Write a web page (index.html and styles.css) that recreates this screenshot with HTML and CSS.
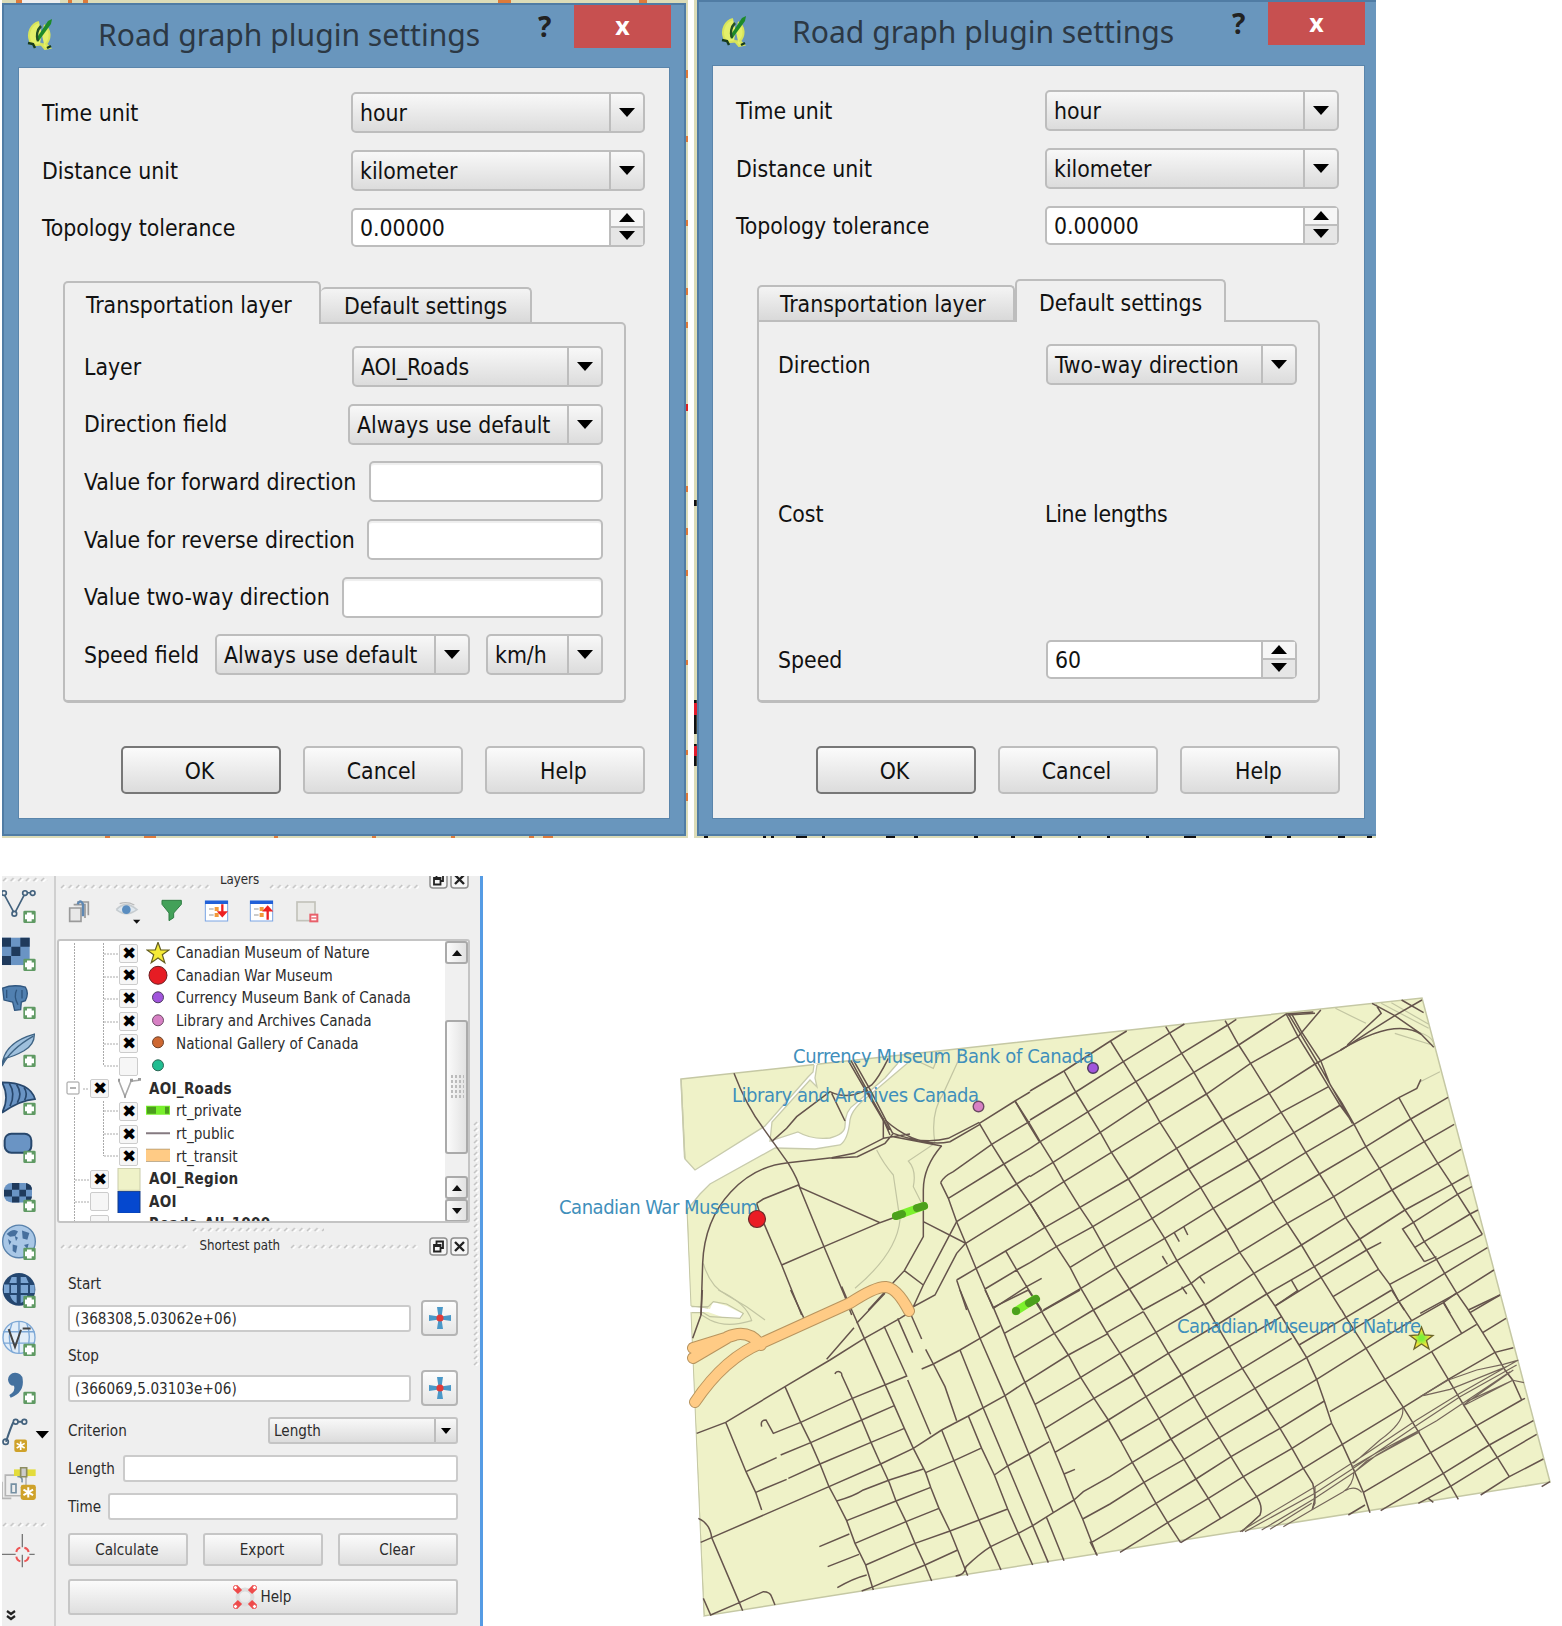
FILE: index.html
```html
<!DOCTYPE html>
<html lang="en">
<head>
<meta charset="utf-8">
<title>Road graph plugin</title>
<link rel="stylesheet" href="styles.css">
</head>
<body>
<svg width="0" height="0" class="defs">
  <defs>
    <g id="plus"><rect x="70" y="86" width="37" height="37" rx="4" fill="#5f9a63"/><path d="M88 91v27M75 104.500h27" stroke="#fff" stroke-width="14"/></g>
    <g id="spark"><rect x="-19" y="-19" width="38" height="38" rx="6" fill="#cfa22a"/><path d="M0-13V13M-12-7L12 7M-12 7L12-7" stroke="#fff" stroke-width="5"/></g>
    <g id="float"><rect x="1" y="1" width="17" height="17" rx="3" fill="#f6f6f6" stroke="#8f8f8f" stroke-width="1.500"/><path d="M7.500 7V4.500H14V11H12M5 8h6.500v6.500H5zM5 9h6" fill="none" stroke="#222" stroke-width="1.800"/></g>
    <g id="shut"><rect x="1" y="1" width="17" height="17" rx="3" fill="#f6f6f6" stroke="#8f8f8f" stroke-width="1.500"/><path d="M5 5l9 9M14 5l-9 9" stroke="#222" stroke-width="2.400"/></g>
    <g id="qgis">
      <path d="M12 4C4 6 0 15 3 23c3 6 9 4 14 3M17 7c7 4 7 14 2 19l4 4-5 1-5-6" fill="#e4f06a" stroke="#d8e45a" stroke-width="2"/>
      <path d="M9 21L21 3l4-2-1 5-13 18z" fill="#1d8a2a"/><path d="M14 8c-4 4-5 10-3 15" stroke="#234f25" stroke-width="2.500" fill="none"/><path d="M1 25l5 1 2 4M20 30l4-2" stroke="#173b1c" stroke-width="2.500" fill="none"/>
    </g>
    <g id="target"><path d="M8 0h6L12.500 10h-3zM8 22h6L12.500 12h-3zM0 8v6l10-1.500v-3zM22 8v6L12 12.500v-3z" fill="#4a98c8"/><circle cx="11" cy="11" r="3.600" fill="#e23a3a"/></g>
    <pattern id="grip" width="7.600" height="6" patternUnits="userSpaceOnUse"><path d="M1 5l3-3" stroke="#c3c3c3" stroke-width="1.500"/><path d="M3 6l3-3" stroke="#fff" stroke-width="1.300"/></pattern>
  </defs>
</svg>

<main class="page">
<section class="dialogs">
  <div class="shot shot-a">
    <svg class="backdrop" width="686" height="838"><path d="M14 0h6M66 0h4M81 0h5M496 0h13M637 0h8" stroke="#dd7a3a" stroke-width="6"/><path d="M20 1h38" stroke="#eee" stroke-width="5"/><path d="M684.500 70v8M684.500 136v6M684.500 220v6M684.500 288v7M684.500 322v6M684.500 486v6M684.500 528v7M684.500 570v6M684.500 660v5M684.500 750v5M684.500 793v8M103 836.500h5M142 836.500h12M272 836.500h4M370 836.500h4M449 836.500h4M527 836.500h5M541 836.500h10" stroke="#dd7a3a" stroke-width="4"/><path d="M684.500 404v7" stroke="#d22" stroke-width="4"/></svg>
    <div class="dialog">
      <header class="titlebar">
        <svg class="logo" width="27" height="32"><use href="#qgis"/></svg>
        <h1>Road graph plugin settings</h1><span class="what">?</span><span class="close">x</span>
      </header>
      <div class="client">
        <div class="form">
          <label>Time unit</label><div class="combo"><span>hour</span><i></i></div>
          <label>Distance unit</label><div class="combo"><span>kilometer</span><i></i></div>
          <label>Topology tolerance</label><div class="spin"><span>0.00000</span><i></i></div>
        </div>
        <div class="tabs"><span class="tab active first">Transportation layer</span><span class="tab second">Default settings</span></div>
        <div class="pane">
          <div class="row"><label>Layer</label><div class="combo w251"><span>AOI_Roads</span><i></i></div></div>
          <div class="row"><label>Direction field</label><div class="combo w255"><span>Always use default</span><i></i></div></div>
          <div class="row"><label>Value for forward direction</label><div class="field w234"></div></div>
          <div class="row"><label>Value for reverse direction</label><div class="field w236"></div></div>
          <div class="row"><label>Value two-way direction</label><div class="field w261"></div></div>
          <div class="row"><label>Speed field</label><div class="combo w255"><span>Always use default</span><i></i></div><div class="combo w117"><span>km/h</span><i></i></div></div>
        </div>
        <div class="buttons"><b class="ok">OK</b><b>Cancel</b><b>Help</b></div>
      </div>
    </div>
  </div>
  <div class="shot shot-b">
    <svg class="backdrop" width="682" height="838"><path d="M1 500v6M1 700v34M1 744v22M10 836.500h4M69 836.500h3M77 836.500h3M102 836.500h11M128 836.500h3M192 836.500h9M220 836.500h4M280 836.500h4M317 836.500h4M340 836.500h8M384 836.500h3M413 836.500h3M452 836.500h3M490 836.500h12M571 836.500h7M593 836.500h4M644 836.500h7M673 836.500h5" stroke="#111" stroke-width="3.500"/><path d="M1 703v12M1 746v10" stroke="#e21b2c" stroke-width="4"/></svg>
    <div class="dialog">
      <header class="titlebar">
        <svg class="logo" width="27" height="32"><use href="#qgis"/></svg>
        <h1>Road graph plugin settings</h1><span class="what">?</span><span class="close">x</span>
      </header>
      <div class="client">
        <div class="form">
          <label>Time unit</label><div class="combo"><span>hour</span><i></i></div>
          <label>Distance unit</label><div class="combo"><span>kilometer</span><i></i></div>
          <label>Topology tolerance</label><div class="spin"><span>0.00000</span><i></i></div>
        </div>
        <div class="tabs"><span class="tab first">Transportation layer</span><span class="tab active second">Default settings</span></div>
        <div class="pane defaults">
          <div class="row"><label>Direction</label><div class="combo w251"><span>Two-way direction</span><i></i></div></div>
          <div class="row cost"><label>Cost</label><span class="value">Line lengths</span></div>
          <div class="row"><label>Speed</label><div class="spin w251"><span>60</span><i></i></div></div>
        </div>
        <div class="buttons"><b class="ok">OK</b><b>Cancel</b><b>Help</b></div>
      </div>
    </div>
  </div>
</section>

<section class="workspace">
  <div class="toolbar">
    <svg class="griprow" width="50" height="6"><rect width="46" height="6" fill="url(#grip)"/></svg>
    <svg viewBox="0 0 165 144"><g fill="none" stroke="#43627e" stroke-width="5"><path d="M14 40L40 88M47 88L72 40M82 32h10"/><circle cx="12" cy="33" r="7"/><circle cx="75" cy="33" r="7"/><circle cx="98" cy="33" r="7"/><circle cx="43" cy="95" r="7"/></g><use href="#plus"/></svg>
    <svg viewBox="0 0 165 144"><rect x="6" y="23" width="83" height="82" fill="#6a94c4"/><path d="M6 23h27v27H6zM61 23h28v27H61zM34 50h27v28H34zM6 78h27v27H6z" fill="#1f3a5c"/><use href="#plus"/></svg>
    <svg viewBox="0 0 165 144"><path d="M8 30Q40 18 76 27Q88 45 76 68L64 72L62 95L44 97L38 72L12 66Z" fill="#5180b0" stroke="#2f557e" stroke-width="4"/><path d="M20 35v25M50 35Q40 55 54 80M66 36v25" stroke="#2f557e" stroke-width="4" fill="none"/><use href="#plus"/></svg>
    <svg viewBox="0 0 165 144"><path d="M6 120Q10 50 103 24Q104 55 72 74Q40 92 15 97Z" fill="#9fc0dd" stroke="#3f6485" stroke-width="4"/><path d="M6 120Q30 70 100 30" fill="none" stroke="#3f6485" stroke-width="4"/><use href="#plus"/></svg>
    <svg viewBox="0 0 165 144"><path d="M6 25Q90 25 105 75Q60 78 6 116Q30 70 6 25Z" fill="#6a94c4" stroke="#27476c" stroke-width="5"/><path d="M28 28Q48 60 30 96M50 32Q68 58 52 86M72 40Q84 58 74 78" fill="none" stroke="#27476c" stroke-width="5"/><use href="#plus"/></svg>
    <svg viewBox="0 0 165 144"><rect x="14" y="35" width="80" height="57" rx="20" fill="#6a94c4" stroke="#27476c" stroke-width="6"/><use href="#plus"/></svg>
    <svg viewBox="0 0 165 144"><rect x="12" y="36" width="84" height="58" rx="22" fill="#6a94c4"/><path d="M36 36h22v20H36zM78 36q18 4 18 20H78zM12 56h24v20H12zM58 56h20v20H58zM36 76h22v18H36zM78 76h18q-2 16-18 18z" fill="#1f3a5c"/><use href="#plus"/></svg>
    <svg viewBox="0 0 165 144"><circle cx="57" cy="67" r="49" fill="#a9c7e6" stroke="#5881ab" stroke-width="4"/><path d="M20 45q20-20 34-8l-8 14-16 2zM66 34l22 8-6 20-14-4zM38 76l14 4-4 22-10-6zM72 78l14-4-4 16zM44 50l10 6-6 10zM24 60l10 8-6 10z" fill="#466f9d"/><use href="#plus"/></svg>
    <svg viewBox="0 0 165 144"><circle cx="57" cy="67" r="49" fill="#24466f"/><g fill="#7ba5d3"><path d="M35 30h15v18H28zM62 30h16l8 18H62zM12 52h16v26H12zM33 54h18v24H33zM62 54h22v24H62zM90 54h14v24H90zM30 84h20v24Q36 104 30 84zM62 84h20q-6 20-20 24z"/></g><use href="#plus"/></svg>
    <svg viewBox="0 0 165 144"><circle cx="57" cy="67" r="48" fill="#e2edf8" stroke="#7da8d6" stroke-width="4"/><path d="M10 50h94M10 84h94M57 20v94M36 24q-16 42 0 86M80 24q16 42 0 86" stroke="#7da8d6" stroke-width="4" fill="none"/><path d="M26 42l19 54 18-52M68 40h24" fill="none" stroke="#444" stroke-width="6"/><use href="#plus"/></svg>
    <svg viewBox="0 0 165 144"><path d="M24 50a22 20 0 0 1 44-2q6 40-36 56l-4-8q20-12 14-28-16 0-18-18z" fill="#44719f"/><use href="#plus"/></svg>
    <svg viewBox="0 0 165 144"><path d="M18 92Q34 44 40 34M54 32h12" fill="none" stroke="#43627e" stroke-width="6"/><g fill="none" stroke="#43627e" stroke-width="5"><circle cx="47" cy="32" r="7"/><circle cx="73" cy="32" r="7"/><circle cx="17" cy="92" r="8"/></g><use href="#spark" x="62" y="104"/><path d="M107 60h40l-20 22z" fill="#000"/></svg>
    <svg viewBox="0 0 165 144"><path d="M6 68v50h28M16 48h62v62H16z" fill="#eee" stroke="#b5b5b5" stroke-width="5"/><path d="M34 75h14v26H34zM52 52q18 0 14 18" fill="none" stroke="#7590a3" stroke-width="5"/><path d="M42 31h65v20H42z" fill="#e3dc3c"/><path d="M62 26h18v27H62z" fill="#ccc" stroke="#8d8d60" stroke-width="5"/><use href="#spark" x="84" y="100" transform="translate(-16 -20) scale(1.200)"/></svg>
    <svg class="griprow low" width="50" height="6"><rect width="46" height="6" fill="url(#grip)"/></svg>
    <svg class="cross" viewBox="0 0 165 105"><path d="M67 0v40M67 62v38M5 61h42M88 61h16" stroke="#777" stroke-width="4"/><path d="M49 54q2-12 12-13M73 41q11 2 13 13M86 68q-2 12-13 14M61 82q-10-2-12-14" fill="none" stroke="#e55" stroke-width="6"/></svg>
    <svg class="more" width="20" height="14"><path d="M4 2l4 3 4-3M4 7l4 3 4-3" fill="none" stroke="#222" stroke-width="2.200"/></svg>
  </div>

  <div class="panel">
    <div class="dockhead cut"><svg width="150" height="6"><rect width="150" height="6" fill="url(#grip)"/></svg><span>Layers</span><svg width="150" height="6"><rect width="150" height="6" fill="url(#grip)"/></svg><svg width="41" height="19"><use href="#float"/><use href="#shut" x="21"/></svg></div>
    <svg class="actions" width="413" height="28" viewBox="190 85 1239 84">
      <path d="M210 115h34v40h-34zM222 105h34v40M232 97h34v40" fill="#e8e8e8" stroke="#9a9a9a" stroke-width="5"/><path d="M234 104q8-18 16 0v36" fill="none" stroke="#5f88b3" stroke-width="7"/>
      <path d="M350 120q28-30 62 0q-32 24-62 0" fill="#dfe7ee" stroke="#c6ccd0" stroke-width="5"/><circle cx="380" cy="120" r="13" fill="#5a8dc0"/><path d="M360 102q22-8 44 4" fill="none" stroke="#bbb" stroke-width="4"/><path d="M400 150h22l-11 12z" fill="#111"/>
      <path d="M487 92h58v12l-23 26v14l-14 9v-23l-21-26z" fill="#43a159" stroke="#2f7d43" stroke-width="3"/>
      <g id="exp"><rect x="617" y="94" width="67" height="60" fill="#fff" stroke="#7aa5e5" stroke-width="3"/><path d="M616 98h69" stroke="#2160d8" stroke-width="10"/><path d="M628 118h14M628 136h14" stroke="#bbb" stroke-width="5"/><path d="M645 118h12M645 136h12" stroke="#f29a3a" stroke-width="12"/></g><path d="M668 104v28M659 128h18l-9 10z" stroke="#e22" stroke-width="7" fill="#e22"/>
      <use href="#exp" x="135"/><path d="M804 150v-32M795 122h18l-9-10z" stroke="#e22" stroke-width="7" fill="#e22"/>
      <rect x="892" y="97" width="54" height="56" fill="#e9e9e6" stroke="#c2c2ba" stroke-width="5"/><rect x="932" y="135" width="21" height="20" fill="#fff" stroke="#e8606b" stroke-width="6"/><path d="M935 145h16" stroke="#e8606b" stroke-width="4"/>
    </svg>
    <div class="tree">
      <svg class="branches" width="80" height="282"><path d="M15.500 2V139M15.500 156V282M44.500 2V125M44.500 160V215M45 13h14M45 36h14M45 58h14M45 81h14M45 103h14M45 125h14M24 148h6M45 170h14M45 193h14M45 215h14M16 239h14M16 261h14" fill="none" stroke="#aaa" stroke-width="1" stroke-dasharray="2 1"/><rect x="8" y="141" width="12" height="12" rx="1" fill="#fff" stroke="#999"/><path d="M11 147h6" stroke="#666"/></svg>
      <div class="item"><i class="on"></i><svg viewBox="-12 -11.300 24 22.600"><path d="M0-11L2.700-3.500L11-3.300L4.300 1.500L6.800 9.500L0 4.800L-6.800 9.500L-4.300 1.500L-11-3.300L-2.700-3.500Z" fill="#f5ea36" stroke="#655f22" stroke-width="1.200"/></svg><span>Canadian Museum of Nature</span></div>
      <div class="item"><i class="on"></i><svg viewBox="-12 -11.300 24 22.600"><circle r="9" cy="-1" fill="#e61c24" stroke="#6b1d20"/></svg><span>Canadian War Museum</span></div>
      <div class="item"><i class="on"></i><svg viewBox="-12 -11.300 24 22.600"><circle r="5.500" cy="-1" fill="#a155dc" stroke="#4e3b60"/></svg><span>Currency Museum Bank of Canada</span></div>
      <div class="item"><i class="on"></i><svg viewBox="-12 -11.300 24 22.600"><circle r="5.500" cy="-1" fill="#d780c4" stroke="#6b4a64"/></svg><span>Library and Archives Canada</span></div>
      <div class="item"><i class="on"></i><svg viewBox="-12 -11.300 24 22.600"><circle r="5.500" cy="-1" fill="#ce6832" stroke="#6b4029"/></svg><span>National Gallery of Canada</span></div>
      <div class="item"><i></i><svg viewBox="-12 -11.300 24 22.600"><circle r="5.500" cy="-1" fill="#21bd91" stroke="#2b6654"/></svg></div>
      <div class="item group"><i class="on"></i><svg viewBox="-12 -11.300 24 22.600"><path d="M-10-8L-4 7L2-8L10-9" fill="none" stroke="#aaa" stroke-width="1.600"/><path d="M-11-9h2M1-9h3M9-10h3M-5 7h2" stroke="#999" stroke-width="3"/></svg><span>AOI_Roads</span></div>
      <div class="item"><i class="on"></i><svg viewBox="-12 -11.300 24 22.600"><path d="M-12-1h24" stroke="#78f02c" stroke-width="9"/><path d="M-11-1h9M7-1h4" stroke="#4c9d1d" stroke-width="7"/></svg><span>rt_private</span></div>
      <div class="item"><i class="on"></i><svg viewBox="-12 -11.300 24 22.600"><path d="M-12-1h24" stroke="#857a80" stroke-width="2"/></svg><span>rt_public</span></div>
      <div class="item"><i class="on"></i><svg viewBox="-12 -11.300 24 22.600"><path d="M-12-1h24" stroke="#ad946d" stroke-width="13"/><path d="M-12-1h24" stroke="#ffcb85" stroke-width="11.500"/></svg><span>rt_transit</span></div>
      <div class="item group"><i class="on"></i><svg viewBox="-12 -11.300 24 22.600"><rect x="-11" y="-11" width="22" height="22" fill="#eff2c8" stroke="#c9cba9"/></svg><span>AOI_Region</span></div>
      <div class="item group"><i></i><svg viewBox="-12 -11.300 24 22.600"><rect x="-11" y="-11" width="22" height="22" fill="#0548cf" stroke="#123a86"/></svg><span>AOI</span></div>
      <div class="item group"><i></i><svg viewBox="-12 -11.300 24 22.600"></svg><span>Roads_All_1000</span></div>
      <div class="scroll"><b class="up"></b><em></em><b class="up"></b><b class="down"></b></div>
    </div>
    <svg class="griprow mid" width="132" height="6"><rect width="132" height="6" fill="url(#grip)"/></svg>
    <div class="dockhead"><svg width="130" height="6"><rect width="128" height="6" fill="url(#grip)"/></svg><span>Shortest path</span><svg width="130" height="6"><rect width="128" height="6" fill="url(#grip)"/></svg><svg width="41" height="19"><use href="#float"/><use href="#shut" x="21"/></svg></div>
    <div class="path">
      <label class="cap">Start</label>
      <div class="point"><div class="input">(368308,5.03062e+06)</div><div class="pick"><svg width="22" height="22"><use href="#target"/></svg></div></div>
      <label class="cap">Stop</label>
      <div class="point"><div class="input">(366069,5.03103e+06)</div><div class="pick"><svg width="22" height="22"><use href="#target"/></svg></div></div>
      <div class="line"><label>Criterion</label><div class="combo small"><span>Length</span><i></i></div></div>
      <div class="line"><label>Length</label><div class="input len"></div></div>
      <div class="line"><label>Time</label><div class="input time"></div></div>
      <div class="three"><b>Calculate</b><b>Export</b><b>Clear</b></div>
      <b class="help"><svg width="24" height="24" viewBox="-12 -12 24 24"><circle r="7.500" fill="none" stroke="#ddd" stroke-width="4"/><path d="M-10-10l5 5M10-10l-5 5M-10 10l5-5M10 10l-5-5" stroke="#ee4b4b" stroke-width="6"/><g fill="#fff" stroke="#ee4b4b"><circle cx="-9.500" cy="-9.500" r="2"/><circle cx="9.500" cy="-9.500" r="2"/><circle cx="-9.500" cy="9.500" r="2"/><circle cx="9.500" cy="9.500" r="2"/></g></svg>Help</b>
    </div>
    <svg class="sidegrip" width="6" height="246"><rect width="6" height="246" fill="url(#grip)"/></svg>
  </div>

  <svg class="map" width="1012" height="636" viewBox="550 990 1012 636">
    <path d="M681 1079L1422 998L1550 1482L704 1616L690 1306L687 1210Z" fill="#eff2c8" stroke="#c5c8a4" stroke-width="1.500"/>
    <path d="M676 1150L685 1159L695 1170L765 1126L808 1077L813 1072L814 1064L817 1064L815 1078L817 1087L810 1080L772 1122L770 1141L798 1132Q812 1140 830 1138Q845 1134 845 1126Q845 1110 855 1104L885 1078L898 1063L910 1061L870 1095Q852 1108 850 1120Q848 1140 840 1145L815 1149L775 1148L710 1184L700 1194L687 1210L670 1212Z" fill="#fff"/>
    <path d="M681 1079L685 1159L695 1170L765 1126L808 1077L813 1072L814 1065M817 1065L815 1078L817 1087L810 1080L772 1122L770 1141L798 1132Q812 1140 830 1138Q845 1134 845 1126Q845 1110 855 1104L885 1078L898 1063M910 1061L870 1095Q852 1108 850 1120Q848 1140 840 1145L815 1149L775 1148L710 1184L700 1194L687 1210" fill="none" stroke="#c8cbac" stroke-width="1.300"/>
    <path d="M670 1216L687 1210L691 1306L710 1309L713 1302L727 1306L743 1314L741 1319L725 1318L708 1312L691 1312L704 1616L670 1620Z" fill="#fff"/>
    <path d="M687 1210L691 1306L708 1308M691 1312L704 1616" fill="none" stroke="#c5c8a4"/>
    <g class="bounds">
      <g transform="translate(550 990) scale(.33333)"><path d="M1235 190L1180 310Q1140 370 1155 460L1075 513Q1100 540 1090 590L1115 640M980 480Q1000 520 1030 555L1050 690Q1040 790 915 895M460 820Q480 890 530 915L590 950L645 990M1095 210l55 25 20-50"/></g>
      <g transform="translate(1030 990) scale(.33933 .33333)"><path d="M900 55l90 45M1035 40l140 75M1065 38l110 65M1120 120q70 15 70 45M1150 275l58-30M1075 130l110 35"/></g>
      <g transform="translate(660 1290) scale(.33333)"><path d="M95 50h50L160 35L200 42L250 70L240 85L150 80L130 68H95M175 0Q260 40 275 92Q200 115 150 90L125 75"/></g>
    </g>
    <g class="roads">
      <g transform="translate(550 990) scale(.33333)">
        <path d="M552 250Q590 350 640 415L715 520Q745 570 750 595L822 770L885 920L905 975M665 455L710 415L740 380L840 305Q890 330 945 302M845 310L885 393M1015 205Q985 265 965 285L940 300M895 212L940 290L1005 400L1020 435M903 212L952 302L1018 420M911 212L962 302L1028 430"/>
        <path d="M453 975L458 820C465 640 590 530 715 518L845 503L912 490L1000 445V385M845 505L922 500L1005 460L1030 430Q1120 465 1195 445L1288 397M1005 390Q1100 475 1200 455L1290 403M1030 440L1175 468M1000 445L1080 432"/>
        <path d="M1175 467Q1120 530 1120 600V740L1063 842L1028 880M620 640L640 627L745 585L750 592L990 698L1035 682M620 640L633 680L695 825L755 975M695 825L822 770L990 698M1120 695L1247 760L1220 790L1155 915L1090 950L1120 885L1220 695M1063 842L1120 885M1005 905L955 960"/>
        <path d="M1395 333L1433 398L1468 455M1288 400L1325 463L1362 522L1400 582L1440 640L1485 712M1172 578L1195 625L1220 695L1247 760L1278 835L1305 897L1330 955M1367 783L1400 840L1430 890L1475 960M1288 400L1395 333L1440 306M1172 578Q1180 560 1210 545L1325 463L1433 398L1440 394M1195 625L1362 522L1440 475M1220 695L1400 582L1440 557M1247 760L1440 640M1220 870L1367 783L1440 740M1220 870L1250 960M1305 897L1400 840L1440 818M1330 955L1430 890L1475 865"/>
      </g>
      <g transform="translate(1030 990) scale(.33933 .33333)">
        <path d="M-44 333L0 403L30 455L68 517L100 575L147 652L185 710L218 770L252 832L293 897L333 960M0 640L44 712L78 770L118 832L150 895L187 960M100 243L135 306L207 427L240 487L290 567L325 625L360 685L397 745L433 812L475 880L515 945M237 153L275 215L312 275L347 333L383 397L432 475L468 537L503 593L540 655L580 720L618 787L660 850L698 912L722 948M400 110L447 190L483 247L520 312L568 390L607 452L643 510L680 570L717 635L758 700L800 765L838 830L893 920L918 960M575 92L615 165L650 220L705 310L740 367L778 428L813 487L853 552L895 620L930 683L972 747L992 780L1027 838L1060 883L1087 935L1103 960M755 72L790 140L840 222L880 290L913 345L955 403L990 470L1030 535L1067 600L1105 660L1130 697L1162 755L1198 808L1222 850L1258 910L1292 960M770 70L800 125L857 213L885 285L920 340L955 403M762 72L848 218L950 400M1087 323L1122 387L1162 455L1202 520L1243 583L1260 613L1297 672L1333 733"/>
        <path d="M0 303L100 243L237 153L285 123M0 390L135 306L275 215L410 130L455 102M0 475L30 455L168 367L312 275L447 190L583 105L608 88M0 560L68 517L207 427L347 333L483 247L615 165L755 72L835 66M0 640L100 575L240 487L383 397L520 312L650 220L790 140L857 60M0 740L44 712L147 652L290 567L432 475L568 390L705 310L840 222L920 178L1000 125L1075 77L1155 30M0 818L78 770L185 710L325 625L468 537L607 452L740 367L880 290M118 832L218 770L360 685L503 593L643 510L778 428L915 345M40 960L150 895L252 832L397 745L540 655L680 570L813 487L955 403L1087 323L1140 295L1152 268M187 960L293 897L433 812L580 720L717 635L853 552L990 470L1122 387L1232 322M333 960L475 880L500 860L618 787L758 700L895 620L1030 535L1162 455L1250 403M515 945L660 850L800 765L930 683L1067 600L1202 520L1270 478M698 912L838 830L972 747L1105 660L1243 583L1292 555M722 948L858 862L992 780L1035 757"/>
        <path d="M1162 815L1098 717L1130 697L1260 613L1302 590M1133 773L1162 755L1297 672L1320 660M1162 815L1198 800M1060 883L1198 808L1333 733M893 920L1027 838M1087 935L1222 850L1348 773M1150 970L1258 910L1367 840M1292 960L1385 915M1008 40L1075 77L1150 130L1190 172M1095 30L1160 68M915 180Q1080 80 1155 135M935 165L1035 70L1020 45M760 75L840 70M453 710l12 25M425 728l15 27M390 798l15 25M500 860l15 20M447 890l15 22M770 870l20 35M1218 935l20 35"/>
      </g>
      <g transform="translate(660 1290) scale(.33333)">
        <path d="M1000 52L1033 130L1062 203L1095 277L1125 343L1155 415L1185 487L1212 552L1242 630L1268 687L1295 757L1310 795M1105 0L1145 65L1183 130L1225 195L1262 262L1302 325L1345 390M1000 52L1105 0M1033 130L1145 65L1260 0M1062 203L1183 130L1300 60M1095 277L1225 195L1345 130M1125 343L1262 262L1380 190M1155 415L1302 325L1420 255M1185 487L1345 390L1458 320M1212 552L1245 538M1242 630L1270 605L1350 560L1417 517M1268 687L1350 642L1452 577M1295 757L1350 725L1488 640M975 0L1000 52"/>
        <path d="M127 0L123 75L98 145M392 0L432 85M545 -10L575 60L613 145L675 283L703 347L733 415L760 475L797 548L812 592L837 655L870 723L893 780L923 857M110 430L197 397L375 290L510 210L613 145L720 85L760 60M197 397L258 545L287 607L305 660M375 290L422 397L452 458L480 522L507 590L530 633L560 692L585 760L617 825L640 900M545 255L577 325L605 390L633 457L662 522L688 578L708 633L738 695L765 760L795 825L815 873M545 258A10 10 0 1 0 525 252M305 410Q300 390 318 390L340 430L422 397L577 325L740 258L672 108M713 85L758 188M752 72L785 147M797 178L820 222L855 290L890 392M785 237L820 222L900 180L960 145L1020 108M743 270L812 433M258 545L350 503M362 495L452 458L605 390L703 347M287 607L380 568M385 565L480 522L633 457L733 415M122 757L155 743L507 590L662 522L760 475L845 420L925 378L1035 317L1095 277"/>
        <path d="M530 633Q580 620 610 600L688 570L790 537M797 548L882 512L962 475M560 692L708 633L812 592M585 760L738 695L837 655M617 825L765 760L870 723L957 690L1043 657M605 903L640 890L795 825L893 780M478 770L568 732M503 830L597 793M532 893Q580 865 620 855M845 420L882 512L957 690L992 770L1023 840M925 378L965 475L1003 555L1043 657L1075 730L1118 825M900 180L970 355L1043 528L1118 707L1165 818M900 0L960 145L1035 317L1107 492L1180 668M1160 683L1212 812M1003 555L1043 528L1107 492L1168 455M887 858Q915 855 918 830Q960 790 992 770L1075 730L1118 707L1180 668L1242 630M115 685Q150 700 155 743L238 938L248 962M130 925L152 975L238 938L310 905Q330 905 335 920L345 945M500 208L582 113M590 100L675 10"/>
      </g>
      <g transform="translate(1090 1290) scale(.33333)">
        <path d="M10 60L50 128L90 190L130 255L168 320L207 385L243 447L282 508L318 567L355 625L392 685M55 390L92 453L127 517L162 577L198 640L233 698L272 758M160 65L198 127L235 190L275 255L313 320L350 382L388 443L423 500L460 560L500 620Q520 650 510 675L455 725M343 42L418 170L457 235L495 295L533 357L570 415L606 475L640 535L668 580Q680 620 668 655M555 48L590 105L627 165L650 203L680 268L703 333L725 400L757 463L783 520L820 607L840 668M755 60L768 82L828 175L885 268L940 352L985 425L1022 488L1060 550L1105 628M905 0L927 35L965 92M1025 185L1075 268L1122 347L1160 407L1198 465L1222 502L1258 560M1135 60L1178 128L1215 187L1245 240L1268 270L1295 330L1305 325"/>
        <path d="M50 128L160 65M90 190L198 127L343 42M130 255L235 190L380 105L530 12M168 320L275 255L418 170L575 80M92 453L207 385L313 320L457 235L605 145M127 517L243 447L350 382L495 295L650 203L828 95L927 35M162 577L282 508L388 443L533 357L680 268L828 175L960 95L1060 38L1098 10M198 640L318 567L423 500L570 415L703 333M233 698L355 625L460 560L606 475L725 400M272 758L392 685L500 620L640 535L757 463L940 352M90 787L233 698M555 48L625 0M627 165L768 82L905 0M720 365L885 268L1025 185L1160 103M940 352L1075 268L1215 187L1270 173M1060 38L1115 130M1140 68L1230 15M1178 128L1248 85M820 607L1022 488L1160 407L1295 330M872 662L1060 550L1198 465L1330 392M985 640L1085 587L1222 502L1340 433M1172 615L1258 560L1360 507M775 675L825 645M1355 590L1380 575M1015 625l15 12M0 755L22 797"/>
      </g>
      <g class="rails" transform="translate(1220 1330) scale(.33333)">
        <path d="M60 605L285 470L395 400L590 270L720 190L895 90M75 605L285 490L400 415L595 283L720 200L890 105M125 600L285 505L405 425L470 375L650 272L870 125M150 598L275 520M190 590L275 540L370 485Q400 465 402 425M375 482Q405 465 425 487M548 235Q555 275 480 330L400 400M600 305L440 393L405 425M600 300L470 368L395 412M730 225L880 120M730 227L880 150L740 215M600 200L685 150L770 120L850 103L890 92M610 197L690 178L860 110M875 150L912 158M285 470V520L275 540"/>
      </g>
    </g>
    <g class="transit-edge"><path id="t1" d="M693 1348L735 1335M693 1358L727 1338M695 1402Q725 1357 764 1342L850 1303M727 1337Q748 1328 761 1345M850 1303Q876 1286 886 1287Q897 1288 909 1311"/></g>
    <use href="#t1" class="transit"/>
    <path d="M896 1216L924 1206M1016 1311L1035 1299" stroke="#7cf12d" stroke-width="8" stroke-linecap="round"/>
    <path d="M896 1216h.1L902 1214M917 1208L924 1206M1016 1311h.1M1029 1303L1036 1299" stroke="#4ca01c" stroke-width="8" stroke-linecap="round"/>
    <g class="names">
      <text x="793" y="1062.500" textLength="301">Currency Museum Bank of Canada</text>
      <text x="732" y="1102" textLength="247">Library and Archives Canada</text>
      <text x="559" y="1214" textLength="199">Canadian War Museum</text>
      <text x="1177" y="1332.500" textLength="244">Canadian Museum of Nature</text>
    </g>
    <circle cx="757" cy="1219" r="8.500" fill="#ea1c24" stroke="#6b2a2a" stroke-width="1.200"/>
    <circle cx="1093" cy="1068" r="5.300" fill="#a155dc" stroke="#4e3b60" stroke-width="1.400"/>
    <circle cx="978.500" cy="1106.500" r="5.300" fill="#d780c4" stroke="#6b4a64" stroke-width="1.400"/>
    <radialGradient id="glow"><stop offset=".2" stop-color="#7cf03c"/><stop offset=".7" stop-color="#f4e33a"/></radialGradient>
    <path d="M1421.500 1327L1424.500 1335L1433 1335.500L1426.500 1340.500L1429 1349L1421.500 1344L1414 1349L1416.500 1340.500L1410 1335.500L1418.500 1335Z" fill="url(#glow)" stroke="#6b6426" stroke-width="1.300"/>
  </svg>
</section>
</main>
</body>
</html>
```
FILE: styles.css
```css
* { box-sizing: border-box; }
body { margin: 0; background: #fff; font-family: "DejaVu Sans Condensed", "DejaVu Sans", sans-serif; color: #111; }
.defs { position: absolute; }
.page { width: 1562px; height: 1626px; overflow: hidden; display: flex; flex-direction: column; gap: 38px; }
.page svg { display: block; flex: none; }
b, i, em { font-weight: normal; font-style: normal; }

/* Settings dialogs */
.dialogs { display: flex; gap: 6px; height: 838px; padding-left: 2px; }
.shot { position: relative; background: #dcdcb8; height: 838px; font-size: 22.8px; white-space: nowrap; }
.shot-a { width: 686px; padding: 3px 2px 2px 0; }
.shot-b { width: 682px; padding: 0 0 2px 3px; }
.backdrop { position: absolute; left: 0; top: 0; }
.dialog { position: relative; height: 833px; background: #6996bd; border: 2px solid #507ca4; padding: 0 14px 15px; display: flex; flex-direction: column; }
.shot-b .dialog { height: 836px; border-right: 0; padding: 0 11px 15px 13px; }
.titlebar { height: 62px; display: flex; align-items: flex-start; }
.shot-b .titlebar { height: 63px; }
.logo { margin: 13px 0 0 9px; }
.titlebar h1 { margin: 8px 0 0 44px; font: 30.1px/44px "Noto Sans", sans-serif; color: #2c3844; width: 440px; }
.what { width: 36px; font: bold 28px/42px "Noto Sans", sans-serif; color: #222; }
.close { width: 97px; height: 43px; margin-right: -2px; background: #c75050; color: #fff; font: bold 25px/40px "Noto Sans", sans-serif; text-align: center; }
.client { flex: 1; background: #efefef; border: 1px solid #5a85ab; padding: 24px 24px 0 23px; }
.form { display: grid; grid-template-columns: 309px 294px; grid-template-rows: 41px 41px 39px; row-gap: 17px; }
label { align-self: center; }
.combo, .field, .spin { display: flex; border: 2px solid #bdbdbd; border-radius: 5px; background: linear-gradient(#f8f8f8, #dcdcdc); height: 41px; }
.combo span, .spin span { flex: 1; padding-left: 7px; line-height: 39px; }
.combo i { width: 34px; border-left: 2px solid #bdbdbd; display: grid; place-items: center; }
.combo i::before { content: ""; border: 8px solid transparent; border-top: 9px solid #000; border-bottom: 0; }
.field { background: #fff; box-shadow: inset 0 2px 1px #eee; }
.spin { background: #fff; height: 39px; }
.spin span { line-height: 37px; }
.spin i { width: 34px; border-left: 2px solid #bdbdbd; display: flex; flex-direction: column; align-items: center; justify-content: space-between; padding: 3px 0 5px; background: linear-gradient(#f6f6f6 0 46%, #bdbdbd 46% 52%, #e6e6e6 52%); }
.spin i::before { content: ""; border: 8px solid transparent; border-bottom: 9px solid #000; border-top: 0; }
.spin i::after { content: ""; border: 8px solid transparent; border-top: 9px solid #000; border-bottom: 0; }
.tabs { display: flex; align-items: flex-end; height: 41px; margin: 34px 0 0 21px; }
.tab { height: 35px; border: 2px solid #bdbdbd; border-bottom: 0; border-radius: 5px 5px 0 0; background: linear-gradient(#f4f4f4, #d9d9d9); line-height: 35px; padding-left: 21px; }
.tab.active { height: 43px; margin-bottom: -2px; background: #efefef; position: relative; line-height: 44px; }
.first { width: 258px; }
.second { width: 211px; padding-left: 22px; }
.second:not(.active) { border-left: 0; padding-left: 23px; }
.pane { width: 563px; height: 381px; margin-left: 21px; border: 2px solid #bdbdbd; border-bottom-width: 3px; border-radius: 0 5px 5px 5px; padding: 22px 21px 0 19px; display: flex; flex-direction: column; gap: 16.7px; }
.shot-b .pane { height: 383px; }
.row { display: flex; align-items: center; height: 41px; }
.row label { flex: 1; }
.row .w117 { margin-left: 16px; }
.w251 { width: 251px; } .w255 { width: 255px; } .w234 { width: 234px; } .w236 { width: 236px; } .w261 { width: 261px; } .w117 { width: 117px; }
.defaults { gap: 0; justify-content: space-between; padding-bottom: 20px; }
.value { width: 252px; letter-spacing: -.25px; }
.cost { margin-top: 4px; }
.buttons { display: flex; justify-content: flex-end; gap: 22px; margin-top: 43px; }
.buttons b { width: 160px; height: 48px; border: 2px solid #bdbdbd; border-radius: 5px; background: linear-gradient(#fbfbfb, #dcdcdc); text-align: center; line-height: 46px; padding-right: 3px; }
.buttons .ok { border-color: #777; }

/* Main window */
.workspace { display: flex; height: 750px; padding-left: 2px; }
.toolbar { width: 54px; background: #efefef; border-right: 2px solid #d0d0d0; height: 750px; overflow: hidden; }
.toolbar > svg { width: 55px; height: 48.1px; margin-left: -2px; }
.toolbar .griprow { height: 6px; margin-left: 0; }
.toolbar .low { margin-top: 14px; }
.toolbar .cross { height: 35px; margin-top: 7px; }
.toolbar .more { width: 20px; height: 14px; margin: 40px 0 0 1px; }
.panel { position: relative; width: 427px; height: 750px; background: #efefef; border-right: 3px solid #559be4; font-size: 15.1px; color: #2c2c2c; }
.dockhead { display: flex; align-items: center; justify-content: space-between; height: 22px; margin: 0 10px 0 4px; font-size: 13.2px; line-height: 20px; }
.cut { height: 13px; overflow: hidden; align-items: flex-end; }
.cut span { line-height: 19px; }
.actions { margin: 9px 0 0 7px; }
.tree { position: relative; margin: 13px 0 0 1px; width: 413px; height: 284px; border: 2px solid #c4c4c4; border-radius: 3px; background: #fff; overflow: hidden; padding-top: 1px; }
.branches { position: absolute; left: 0; top: 0; }
.item { position: relative; display: flex; align-items: center; height: 22.6px; padding-left: 60px; white-space: nowrap; }
.item i { width: 19px; height: 19px; border: 1px solid #ccc; background: #f6f6f6; border-radius: 2px; position: relative; }
.item .on::before { content: "✖"; position: absolute; left: 2px; top: -1px; font: 17px/18px "DejaVu Sans", sans-serif; color: #000; }
.item svg { width: 24px; height: 22.6px; margin: 0 6px 0 8px; }
.group { padding-left: 31px; font-weight: bold; }
.group span { margin-left: 2px; letter-spacing: .25px; }
.scroll { position: absolute; right: 0; top: 0; width: 23px; height: 280px; background: #f0f0f0; display: flex; flex-direction: column; }
.scroll b, .scroll em { border: 2px solid #aaa; border-radius: 3px; background: linear-gradient(90deg, #fbfbfb, #e2e2e2); height: 23px; display: grid; place-items: center; flex: none; }
.scroll em { height: 134px; margin: 56px 0 22px; }
.scroll em::before { content: ""; width: 14px; height: 26px; background: radial-gradient(#bbb 1px, transparent 1.2px) 0 0/4px 5px; }
.up::before, .down::before { content: ""; border: 5px solid transparent; border-bottom: 6px solid #111; border-top: 0; }
.down::before { border-top: 6px solid #111; border-bottom: 0; }
.griprow.mid { margin: 3px 0 3px 136px; }
.path { margin: 0 22px 0 12px; }
.cap { display: block; height: 26px; line-height: 26px; margin-top: 14px; }
.cap + .point { margin-top: 3px; }
.point { display: flex; align-items: center; justify-content: space-between; height: 36px; }
.point + .cap { margin-top: 7px; margin-bottom: -2px; }
.input { border: 2px solid #cbcbcb; border-radius: 3px; background: #fff; height: 27px; width: 343px; padding-left: 5px; line-height: 24px; letter-spacing: .1px; }
.pick { width: 37px; height: 36px; border: 2px solid #b5b5b5; border-radius: 4px; background: linear-gradient(#fdfdfd, #e6e6e6); display: grid; place-items: center; }
.line { display: flex; align-items: center; justify-content: space-between; height: 27px; margin-top: 11px; }
.small { width: 190px; height: 27px; border-color: #c4c4c4; border-radius: 3px; }
.small span { line-height: 24px; padding-left: 4px; }
.small i { width: 22px; }
.small i::before { border-width: 6px 5px 0; }
.len { width: 335px; }
.time { width: 350px; }
.three { display: flex; justify-content: space-between; margin-top: 13px; }
.three b, .help { width: 120px; height: 33px; border: 2px solid #c6c6c6; border-radius: 3px; background: linear-gradient(#fbfbfb, #dfdfdf); text-align: center; line-height: 31px; padding-right: 2px; }
.path .help { width: auto; height: 36px; margin-top: 13px; display: flex; align-items: center; justify-content: center; gap: 4px; }
.sidegrip { position: absolute; right: 1px; top: 244px; }

/* Map canvas */
.map { margin: 114px 0 0 67px; }
.roads path, .bounds path { fill: none; vector-effect: non-scaling-stroke; }
.roads path { stroke: #65544c; stroke-width: 1.5px; }
.roads .rails path { stroke: #75665b; stroke-width: 1.2px; }
.bounds path { stroke: #c2c5a2; stroke-width: 1.2px; }
.transit-edge path { fill: none; stroke-linecap: round; }
.transit-edge { stroke: #b8955f; stroke-width: 12px; }
.transit { stroke: #ffcb85; stroke-width: 10px; }
.names { fill: #3f8fbb; font-size: 20px; }
```
